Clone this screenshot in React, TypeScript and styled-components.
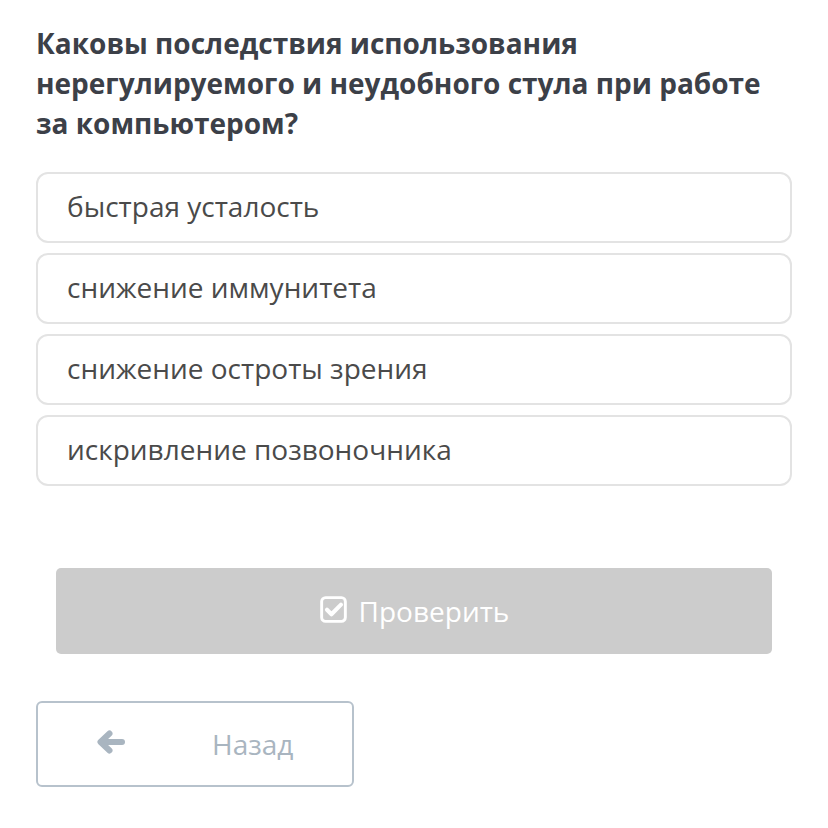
import { createGlobalStyle } from 'styled-components';
import styled from 'styled-components';

const GlobalStyle = createGlobalStyle`
  body {
    margin: 0;
    background: #ffffff;
    font-family: 'Open Sans', 'Noto Sans', sans-serif;
  }
`;

const answers = [
  'быстрая усталость',
  'снижение иммунитета',
  'снижение остроты зрения',
  'искривление позвоночника',
];

const CheckSquareIcon = () => (
  <svg width="29" height="29" viewBox="0 0 24 24" fill="none">
    <rect x="2.2" y="2.2" width="19.6" height="19.6" rx="3.2" stroke="currentColor" strokeWidth="2.4" />
    <path
      d="M6.6 12.2l3.7 3.7L18.2 8"
      stroke="currentColor"
      strokeWidth="3.4"
      strokeLinecap="round"
      strokeLinejoin="round"
    />
  </svg>
);

const ArrowLeftIcon = () => (
  <svg width="30" height="26" viewBox="0 0 30 26" fill="none">
    <path d="M26 13H6" stroke="currentColor" strokeWidth="6" strokeLinecap="round" />
    <path
      d="M13.5 4.5L4.5 13l9 8.5"
      stroke="currentColor"
      strokeWidth="6"
      strokeLinecap="round"
      strokeLinejoin="round"
    />
  </svg>
);

export default function App() {
  return (
    <Page>
      <GlobalStyle />
      <Question>
        Каковы последствия использования нерегулируемого и неудобного стула при работе
        за компьютером?
      </Question>
      <Options>
        {answers.map((answer) => (
          <Option key={answer}>{answer}</Option>
        ))}
      </Options>
      <CheckButton>
        <CheckSquareIcon />
        <span>Проверить</span>
      </CheckButton>
      <BackButton>
        <ArrowLeftIcon />
        <span>Назад</span>
      </BackButton>
    </Page>
  );
}

const Page = styled.div({
  width: '828px',
  padding: '23px 36px 0 36px',
  boxSizing: 'border-box',
  display: 'flex',
  flexDirection: 'column',
});

const Question = styled.h1({
  margin: 0,
  fontSize: '28px',
  lineHeight: '40px',
  fontWeight: 700,
  color: '#3c4048',
  maxWidth: '740px',
});

const Options = styled.div({
  marginTop: '29px',
  display: 'flex',
  flexDirection: 'column',
  gap: '10px',
});

const Option = styled.div({
  height: '71px',
  boxSizing: 'border-box',
  border: '2px solid #e3e3e3',
  borderRadius: '12px',
  padding: '0 29px 3px 29px',
  display: 'flex',
  alignItems: 'center',
  fontSize: '28px',
  color: '#4a4a4a',
});

const CheckButton = styled.div({
  margin: '82px 20px 0 20px',
  height: '86px',
  borderRadius: '5px',
  background: '#cccccc',
  color: '#ffffff',
  display: 'flex',
  alignItems: 'center',
  justifyContent: 'center',
  gap: '11px',
  fontSize: '28px',
  '& svg': {
    marginTop: '-4px',
  },
});

const BackButton = styled.div({
  marginTop: '47px',
  width: '318px',
  height: '86px',
  boxSizing: 'border-box',
  border: '2px solid #b7c2cc',
  borderRadius: '6px',
  display: 'flex',
  alignItems: 'center',
  padding: '0 0 0 58px',
  gap: '86px',
  color: '#a9b5c0',
  fontSize: '28px',
  '& svg': {
    marginTop: '-4px',
  },
});
